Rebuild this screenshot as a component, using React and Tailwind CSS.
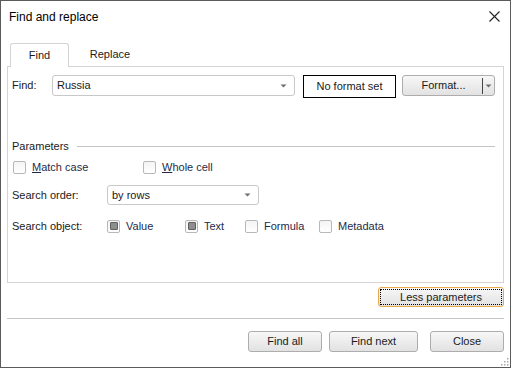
import React from 'react';

const Arrow = () => (
  <svg width="7" height="4" viewBox="0 0 7 4" className="shrink-0">
    <path d="M0.5 0.5h6L3.5 3.5z" fill="#6f6f6f" />
  </svg>
);

function Check({ checked, label, underline, rest }) {
  return (
    <div className="flex items-center">
      <div className="w-[13px] h-[13px] rounded-[2px] border border-[#b8b8b8] bg-gradient-to-b from-[#f4f4f4] to-white flex items-center justify-center">
        {checked && <div className="w-[8px] h-[8px] rounded-[1px] bg-[#8e8e8e] border border-[#5f5f5f]" />}
      </div>
      <span className="ml-[6px] text-[#1f2b48]">
        {underline && <span className="underline">{underline}</span>}
        {rest || label}
      </span>
    </div>
  );
}

function Btn({ w, children }) {
  return (
    <div className={`${w} h-[21px] rounded-[3px] border border-[#adadad] bg-gradient-to-b from-[#f7f7f7] to-[#e2e2e2] flex items-center justify-center text-[#1a1a1a]`}>
      {children}
    </div>
  );
}

export default function App() {
  return (
    <div className="w-[511px] h-[368px] border border-[#5b5b5b] bg-white flex flex-col relative text-[11px] text-[#1a1a1a] font-['Liberation_Sans',Arial,sans-serif]">
      {/* Title bar */}
      <div className="h-[31px] flex items-center justify-between pl-[8px] pr-[10px]">
        <span className="text-[12px] text-black">Find and replace</span>
        <svg width="11" height="11" viewBox="0 0 11 11">
          <path d="M0.5 0.5L10.5 10.5M10.5 0.5L0.5 10.5" stroke="#222" strokeWidth="1.1" />
        </svg>
      </div>

      <div className="px-[6px] mt-[11px] flex flex-col">
        {/* Tabs */}
        <div className="flex items-end h-[23px]">
          <div className="ml-[3px] w-[59px] h-[24px] -mb-px relative z-10 bg-white border-t border-l border-r border-[#d4d4d4] rounded-t-[3px] flex items-center justify-center">
            Find
          </div>
          <div className="w-[82px] h-[23px] flex items-center justify-center">Replace</div>
        </div>

        {/* Panel */}
        <div className="w-[497px] h-[217px] border border-[#d4d4d4] pt-[8px] pl-[4px] pr-[8px] flex flex-col">
          <div className="flex items-start h-[22px]">
            <span className="w-[40px] h-[21px] flex items-center">Find:</span>
            <div className="w-[243px] h-[21px] rounded-[3px] border border-[#c8c8c8] flex items-center justify-between pl-[4px] pr-[7px]">
              <span>Russia</span>
              <Arrow />
            </div>
            <div className="ml-[8px] w-[93px] h-[23px] border border-black flex items-center justify-center">No format set</div>
            <div className="ml-[6px] w-[93px] h-[21px] rounded-[3px] border border-[#adadad] bg-gradient-to-b from-[#f7f7f7] to-[#e2e2e2] flex items-center">
              <span className="flex-1 text-center pl-[2px]">Format...</span>
              <div className="w-px h-[16px] bg-[#444]" />
              <div className="w-[11px] flex justify-center"><Arrow /></div>
            </div>
          </div>

          <div className="mt-[42px] h-[14px] flex items-center">
            <span>Parameters</span>
            <div className="ml-[8px] flex-1 h-px bg-[#c4c4c4]" />
          </div>

          <div className="mt-[7px] h-[14px] flex items-center pl-[1px]">
            <div className="w-[130px]"><Check underline="M" rest="atch case" /></div>
            <Check underline="W" rest="hole cell" />
          </div>

          <div className="mt-[11px] h-[20px] flex items-center">
            <span className="w-[95px]">Search order:</span>
            <div className="w-[152px] h-[20px] rounded-[3px] border border-[#c8c8c8] flex items-center justify-between pl-[4px] pr-[7px]">
              <span>by rows</span>
              <Arrow />
            </div>
          </div>

          <div className="mt-[14px] h-[14px] flex items-center">
            <span className="w-[95px]">Search object:</span>
            <div className="w-[78px]"><Check checked label="Value" /></div>
            <div className="w-[60px]"><Check checked label="Text" /></div>
            <div className="w-[74px]"><Check label="Formula" /></div>
            <Check label="Metadata" />
          </div>
        </div>

        {/* Less parameters */}
        <div className="mt-[4px] flex justify-end">
          <div className="w-[126px] h-[20px] rounded-[3px] border border-[#e9a94c] bg-gradient-to-b from-[#f7f7f7] to-[#e2e2e2] p-px">
            <div className="w-full h-full border border-dotted border-black flex items-center justify-center">
              Less parameters
            </div>
          </div>
        </div>

        <div className="mt-[11px] h-px bg-[#c6c6c6]" />

        {/* Bottom buttons */}
        <div className="mt-[12px] flex justify-end">
          <Btn w="w-[74px]">Find all</Btn>
          <div className="ml-[7px]"><Btn w="w-[89px]">Find next</Btn></div>
          <div className="ml-[12px]"><Btn w="w-[74px]">Close</Btn></div>
        </div>
      </div>

      {/* resize grip */}
      <svg className="absolute right-[1px] bottom-[1px]" width="10" height="10" viewBox="0 0 10 10">
        {[[8, 2], [8, 5], [8, 8], [5, 5], [5, 8], [2, 8]].map(([x, y]) => (
          <rect key={`${x}-${y}`} x={x} y={y} width="1.5" height="1.5" fill="#a8a8a8" />
        ))}
      </svg>
    </div>
  );
}
